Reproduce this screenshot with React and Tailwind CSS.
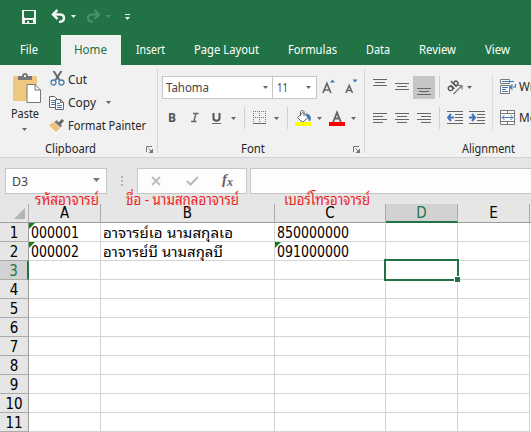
import React from "react";

const UI = "font-['Noto_Sans','Open_Sans',sans-serif]";
const CELL = "font-['DejaVu_Sans_Condensed','DejaVu_Sans','Noto_Sans_Thai_Looped','Loma','Garuda','Waree','Noto_Serif_Thai',sans-serif]";
const THAI = "font-['Noto_Sans_Thai_Looped','Loma','Garuda','Waree','Noto_Serif_Thai',sans-serif]";

function Svg({ w, h, className = "", children }) {
  return (
    <svg width={w} height={h} viewBox={`0 0 ${w} ${h}`} fill="none" className={`block shrink-0 ${className}`}>
      {children}
    </svg>
  );
}

function Arrow({ className = "", color = "#666" }) {
  return (
    <Svg w={5} h={3} className={className}>
      <path d="M0 0H5L2.5 3Z" fill={color} />
    </Svg>
  );
}

// Fixed-advance text run, so that labels keep their exact width.
function Label({ x = 0, y, w, size, fill, family = UI, weight, italic, children }) {
  return (
    <text
      x={x}
      y={y}
      textLength={w}
      lengthAdjust="spacingAndGlyphs"
      fontSize={size}
      fill={fill}
      fontWeight={weight}
      fontStyle={italic ? "italic" : undefined}
      className={family}
    >
      {children}
    </text>
  );
}

function TextBox({ w, h, className = "", ...rest }) {
  return (
    <Svg w={w} h={h} className={`overflow-visible ${className}`}>
      <Label w={w} {...rest} />
    </Svg>
  );
}

function TitleBar() {
  return (
    <div className="h-[35px] flex items-start bg-[#217346]">
      <Svg w={14} h={14} className="ml-[22px] mt-[10px]">
        <path fillRule="evenodd" fill="#f3f3f3" d="M0 0H14V14H0ZM2 1V7L3 8H11L12 7V1ZM3 10V13H5V11H7V13H11V10Z" />
      </Svg>
      <Svg w={15} h={14} className="ml-[15px] mt-[9px]">
        <path d="M2 5.500H9C12 5.500 13 7.500 13 9C13 11.500 11 12.800 8 12.800" stroke="#f3f3f3" strokeWidth="2.500" />
        <path d="M6.500 1L2 5.500L6.500 10" stroke="#f3f3f3" strokeWidth="2.500" />
      </Svg>
      <Arrow color="#f3f3f3" className="ml-[5px] mt-[15px]" />
      <Svg w={15} h={14} className="ml-[10px] mt-[9px]">
        <path d="M13 5.500H6C3 5.500 2 7.500 2 9C2 11.500 4 12.800 7 12.800" stroke="#4e9069" strokeWidth="2.200" />
        <path d="M8.500 1L13 5.500L8.500 10" stroke="#4e9069" strokeWidth="2.200" />
      </Svg>
      <Arrow color="#4e9069" className="ml-[5px] mt-[15px]" />
      <Svg w={5} h={6} className="ml-[14px] mt-[14px]">
        <path d="M0 0H5V1H0ZM0 3H5L2.500 6Z" fill="#f3f3f3" />
      </Svg>
    </div>
  );
}

const tabs = [
  { t: "File", cell: "w-[61px] pl-[20px]", w: 18 },
  { t: "Home", cell: "w-[60px] pl-[13px] bg-[#f1f1f1]", w: 33, fill: "#217346" },
  { t: "Insert", cell: "w-[58px] pl-[15px]", w: 29 },
  { t: "Page Layout", cell: "w-[94px] pl-[15px]", w: 65 },
  { t: "Formulas", cell: "w-[78px] pl-[15px]", w: 49 },
  { t: "Data", cell: "w-[53px] pl-[15px]", w: 24 },
  { t: "Review", cell: "w-[65px] pl-[15px]", w: 37 },
  { t: "View", cell: "w-[62px] pl-[16px]", w: 25 },
];

function Tabs() {
  return (
    <div className="h-[30px] flex bg-[#217346]">
      {tabs.map((t) => (
        <div key={t.t} className={`shrink-0 ${t.cell}`}>
          <TextBox w={t.w} h={30} y={19} size={12} fill={t.fill || "#fff"}>{t.t}</TextBox>
        </div>
      ))}
    </div>
  );
}

function Launcher({ className }) {
  return (
    <Svg w={7} h={7} className={className}>
      <path d="M.5 6V.5H6M2.500 2.500L5 5" stroke="#777" />
      <path d="M7 2.500V7H2.500Z" fill="#777" />
    </Svg>
  );
}

function Clipboard() {
  return (
    <section className="w-[157px] shrink-0">
      <div className="h-[74px] flex">
        <div className="w-[49px]">
          <Svg w={28} h={31} className="ml-[13px] mt-[8px]">
            <rect y="3" width="24" height="25" rx="1" fill="#edc87e" />
            <path d="M5 7V3H9C9 -1 15 -1 15 3H19V7Z" fill="#777" />
            <rect x="11" y="2" width="2" height="2" fill="#f1f1f1" />
            <path d="M14 11.500H22L27.500 17V29.500H14Z" fill="#fff" stroke="#777" />
            <path d="M22 11.500V17H27.500" stroke="#777" />
          </Svg>
          <TextBox w={28} h={18} y={14} size={12} fill="#262626" className="ml-[11px]">Paste</TextBox>
          <Arrow className="ml-[22px] mt-[6px]" />
        </div>
        <div className="pt-[4px]">
          <div className="h-[23px] flex items-center">
            <Svg w={15} h={15} className="ml-[1px] -mt-[4px]">
              <path d="M3.500 0L9.500 9M11.500 0L5.500 9" stroke="#666" strokeWidth="2" />
              <circle cx="3.500" cy="11.500" r="2.500" stroke="#4a7fb5" strokeWidth="1.300" />
              <circle cx="11.500" cy="11.500" r="2.500" stroke="#4a7fb5" strokeWidth="1.300" />
            </Svg>
            <TextBox w={19} h={23} y={15} size={12} fill="#262626" className="ml-[3px]">Cut</TextBox>
          </div>
          <div className="h-[23px] flex items-center">
            <Svg w={16} h={14} className="-mt-[2px]">
              <path d="M.5 .5H5.500L8.500 3.500V11.500H.5Z" fill="#fff" stroke="#666" />
              <path d="M2 4.500H6M2 6.500H6M2 8.500H6" stroke="#4a7fb5" />
              <path d="M6.500 3.500H11.500L14.500 6.500V13.500H6.500Z" fill="#fff" stroke="#666" />
              <path d="M11.500 3.500V6.500H14.500" stroke="#666" />
              <path d="M8 7.500H11M8 9.500H13M8 11.500H13" stroke="#4a7fb5" />
            </Svg>
            <TextBox w={28} h={23} y={15} size={12} fill="#262626" className="ml-[3px]">Copy</TextBox>
            <Arrow className="ml-[10px] -mt-[2px]" />
          </div>
          <div className="h-[23px] flex items-center">
            <Svg w={16} h={14} className="-mt-[3px]">
              <path d="M0 7L5 4L11 10L7 14Z" fill="#edc17b" />
              <path d="M5.500 4L11.500 9.500L13 7.500L7.500 2Z" fill="#777" />
              <path d="M10 6L14 2" stroke="#666" strokeWidth="3" />
            </Svg>
            <TextBox w={78} h={23} y={15} size={12} fill="#262626" className="ml-[3px]">Format Painter</TextBox>
          </div>
        </div>
      </div>
      <div className="h-[18px] flex">
        <TextBox w={51} h={18} y={14} size={12} fill="#262626" className="ml-[45px]">Clipboard</TextBox>
        <Launcher className="ml-[50px] mt-[7px]" />
      </div>
    </section>
  );
}

function Divider() {
  return <div className="w-px h-[84px] mt-[4px] shrink-0 bg-[#d5d5d5]" />;
}

function FontGroup() {
  return (
    <section className="w-[206px] shrink-0">
      <div className="h-[34px] pt-[11px] pl-[4px] flex">
        <div className="w-[111px] h-[23px] border border-[#c6c6c6] bg-white flex">
          <TextBox w={43} h={21} y={15} size={12} fill="#444" className="ml-[3px]">Tahoma</TextBox>
          <Arrow className="ml-[54px] mt-[9px]" />
        </div>
        <div className="w-[44px] h-[23px] border border-l-0 border-[#c6c6c6] bg-white flex">
          <TextBox w={11} h={21} y={15} size={12} fill="#444" className="ml-[4px]">11</TextBox>
          <Arrow className="ml-[18px] mt-[9px]" />
        </div>
        <Svg w={13} h={15} className="ml-[5px] mt-[3px]">
          <path d="M.9 14L4.900 4.500L8.900 14M2.500 11H7.300" stroke="#666" strokeWidth="1.700" />
          <path d="M8 3.500L10.500 .5L13 3.500Z" fill="#3f78b4" />
        </Svg>
        <Svg w={13} h={15} className="ml-[10px] mt-[3px]">
          <path d="M.9 14L4.200 6.500L7.500 14M2.200 11.500H6.200" stroke="#666" strokeWidth="1.600" />
          <path d="M7.500 .5H12.500L10 3.500Z" fill="#3f78b4" />
        </Svg>
      </div>
      <div className="h-[40px] pt-[8px] flex">
        <TextBox w={8} h={22} y={15} size={13} weight={700} fill="#555" className="ml-[10px]">B</TextBox>
        <Svg w={8} h={22} className="ml-[15px]">
          <path d="M2 6.500H7.500M0 14.500H5.500M5 6.500L2.800 14.500" stroke="#666" strokeWidth="1.400" />
        </Svg>
        <Svg w={9} h={22} className="ml-[13px]">
          <path d="M1.500 6V11C1.500 14.700 7.500 14.700 7.500 11V6" stroke="#555" strokeWidth="2" />
          <path d="M0 16.500H9" stroke="#666" />
        </Svg>
        <Arrow className="ml-[10px] mt-[10px]" />
        <div className="w-px h-[22px] ml-[8px] bg-[#d0d0d0]" />
        <Svg w={13} h={13} className="ml-[8px] mt-[4px]">
          <path d="M0 .5H13M0 6.500H13M.5 0V12M6.500 0V12M12.500 0V12" stroke="#777" strokeDasharray="1 1" />
          <path d="M0 12.500H13" stroke="#666" />
        </Svg>
        <Arrow className="ml-[8px] mt-[10px]" />
        <div className="w-px h-[22px] ml-[8px] bg-[#d0d0d0]" />
        <Svg w={16} h={16} className="ml-[7px] mt-[3px]">
          <path d="M2.500 7.500L8 2.500L13 7.500L8 12L6 11Z" fill="#fff" stroke="#666" />
          <path d="M5.500 6V2C5.500 0 9 0 9 2V6" stroke="#666" />
          <path d="M11 4C15 4 16.500 8 14.500 11L13.500 8Z" fill="#3f78b4" stroke="#3f78b4" />
          <path d="M0 12H16V16H0Z" fill="#ff0" />
        </Svg>
        <Arrow className="ml-[6px] mt-[10px]" />
        <Svg w={16} h={16} className="ml-[7px] mt-[3px]">
          <path d="M4.200 12L8 2.500L11.800 12M5.500 8.500H10.500" stroke="#666" strokeWidth="1.900" />
          <path d="M0 12H16V16H0Z" fill="#f00" />
        </Svg>
        <Arrow className="ml-[6px] mt-[10px]" />
      </div>
      <div className="h-[18px] flex">
        <TextBox w={24} h={18} y={14} size={12} fill="#262626" className="ml-[83px]">Font</TextBox>
        <Launcher className="ml-[88px] mt-[7px]" />
      </div>
    </section>
  );
}

function Lines({ d, className = "" }) {
  return (
    <Svg w={14} h={22} className={className}>
      <path d={d} stroke="#666" />
    </Svg>
  );
}

function Alignment() {
  return (
    <section className="w-[166px] shrink-0 overflow-hidden">
      <div className="h-[74px] flex">
        <div className="w-[127px] shrink-0">
          <div className="h-[42px] pt-[11px] flex">
            <Lines className="ml-[8px]" d="M0 3.500H14M2 6.500H12M0 9.500H14" />
            <Lines className="ml-[8px]" d="M0 7.500H14M2 10.500H12M0 13.500H14" />
            <div className="w-[22px] h-[23px] ml-[4px] pl-[4px] bg-[#c6c6c6]">
              <Lines d="M0 12.500H14M2 15.500H12M0 18.500H14" />
            </div>
            <div className="w-px h-[22px] ml-[4px] bg-[#d0d0d0]" />
            <Svg w={17} h={17} className="ml-[7px] mt-[3px]">
              <g transform="rotate(-45 6 7)">
                <ellipse cx="2.500" cy="7" rx="2" ry="2.300" stroke="#555" strokeWidth="1.400" />
                <path d="M5 4.500V10M8 2V10" stroke="#555" strokeWidth="1.400" />
                <ellipse cx="10" cy="7.200" rx="2" ry="2.200" stroke="#555" strokeWidth="1.400" />
              </g>
              <path d="M6.500 15L15 6.500M11 6.500H15V10.500" stroke="#777" strokeWidth="1.200" />
            </Svg>
            <Arrow className="ml-[3px] mt-[10px]" />
          </div>
          <div className="h-[22px] flex">
            <Lines className="ml-[8px]" d="M0 6.500H14M0 9.500H10M0 12.500H14M0 15.500H10" />
            <Lines className="ml-[8px]" d="M0 6.500H14M2 9.500H12M0 12.500H14M2 15.500H12" />
            <Lines className="ml-[8px]" d="M0 6.500H14M4 9.500H14M0 12.500H14M4 15.500H14" />
            <div className="w-px h-[22px] ml-[8px] bg-[#d0d0d0]" />
            <Svg w={16} h={22} className="ml-[7px]">
              <path d="M0 4.500H16M8 7.500H16M8 10.500H16M8 13.500H16M0 16.500H16" stroke="#666" />
              <path d="M1 10.500H7M4 7L1 10.500L4 14" stroke="#3f78b4" strokeWidth="2" />
            </Svg>
            <Svg w={16} h={22} className="ml-[6px]">
              <path d="M0 4.500H16M8 7.500H16M8 10.500H16M8 13.500H16M0 16.500H16" stroke="#666" />
              <path d="M0 10.500H6M3 7L6 10.500L3 14" stroke="#3f78b4" strokeWidth="2" />
            </Svg>
          </div>
        </div>
        <div className="w-px h-[55px] mt-[10px] shrink-0 bg-[#dcdcdc]" />
        <div className="pl-[7px] pt-[14px]">
          <div className="flex h-[31px]">
            <Svg w={16} h={16}>
              <path d="M.5 .5H9.500V4.500H.5ZM.5 6.500H9.500V14.500H.5Z" fill="#fff" stroke="#777" />
              <path d="M2 2.500H14M2 8.500H8M2 10.500H6M2 12.500H8M15.500 5V8H10M12.500 5.500L10 8L12.500 10.500" stroke="#3f78b4" strokeWidth="1.200" />
            </Svg>
            <TextBox w={29} h={16} y={12} size={12} fill="#262626" className="ml-[3px]">Wrap</TextBox>
          </div>
          <div className="flex">
            <Svg w={16} h={16}>
              <path d="M.5 .5H14.500V14.500H.5ZM.5 3.500H14.500M.5 11.500H14.500M7.500 0V3M7.500 12V15" fill="#fff" stroke="#777" />
              <path d="M2 7.500H13M4.500 5L2 7.500L4.500 10M10.500 5L13 7.500L10.500 10" stroke="#3f78b4" />
            </Svg>
            <TextBox w={36} h={16} y={12} size={12} fill="#262626" className="ml-[3px]">Merge</TextBox>
          </div>
        </div>
      </div>
      <div className="h-[18px]">
        <TextBox w={53} h={18} y={14} size={12} fill="#262626" className="ml-[97px]">Alignment</TextBox>
      </div>
    </section>
  );
}

function FormulaBar() {
  return (
    <div className="h-[38px] pt-[10px] pl-[5px] flex border-t border-[#d2d2d2] bg-[#e6e6e6]">
      <div className="w-[102px] h-[26px] border border-[#c6c6c6] bg-[#fdfdfd] flex">
        <TextBox w={16} h={24} y={17} size={12} fill="#444" className="ml-[6px]">D3</TextBox>
        <Svg w={7} h={4} className="ml-[65px] mt-[9px]"><path d="M0 0H7L3.500 4Z" fill="#777" /></Svg>
      </div>
      <Svg w={2} h={10} className="ml-[14px] mt-[8px]">
        <path d="M0 0H2V2H0ZM0 4H2V6H0ZM0 8H2V10H0Z" fill="#b4b4b4" />
      </Svg>
      <div className="w-[110px] h-[26px] ml-[14px] border border-[#c6c6c6] bg-[#fdfdfd] flex">
        <Svg w={10} h={10} className="ml-[13px] mt-[7px]"><path d="M1 1L9 9M9 1L1 9" stroke="#bbb" strokeWidth="1.800" /></Svg>
        <Svg w={13} h={10} className="ml-[25px] mt-[7px]"><path d="M1 5L4.500 8.500L12 1" stroke="#bbb" strokeWidth="2.200" /></Svg>
        <Svg w={14} h={24} className="ml-[22px] overflow-visible">
          <text x="1" y="15" fontSize="15" fontStyle="italic" fontWeight="700" fill="#666" className="font-['Liberation_Serif',serif]">f</text>
          <text x="6" y="17" fontSize="12" fontStyle="italic" fontWeight="700" fill="#666" className="font-['Liberation_Serif',serif]">x</text>
        </Svg>
      </div>
      <div className="flex-1 h-[26px] ml-[3px] border border-r-0 border-[#c6c6c6] bg-[#fdfdfd]" />
    </div>
  );
}

const cols = [
  { k: "A", head: "w-[72px]", body: "w-[72px]" },
  { k: "B", head: "w-[174px]", body: "w-[174px]" },
  { k: "C", head: "w-[111px]", body: "w-[111px]" },
  { k: "D", head: "w-[72px]", body: "w-[72px]" },
  { k: "E", head: "w-[72px]", body: "w-[72px]" },
];

const data = {
  A1: { t: "000001", w: 48, flag: true },
  B1: { t: "อาจารย์เอ นามสกุลเอ", w: 130 },
  C1: { t: "850000000", w: 72 },
  A2: { t: "000002", w: 48, flag: true },
  B2: { t: "อาจารย์บี นามสกุลบี", w: 120 },
  C2: { t: "091000000", w: 72, flag: true },
};

function Note({ className, w, children }) {
  return (
    <div className={`absolute ${className}`}>
      <TextBox w={w} h={16} y={12} size={15} fill="#ed1c24" family={THAI}>{children}</TextBox>
    </div>
  );
}

function Sheet() {
  return (
    <div className="relative h-[237px] bg-white">
      <div className="h-[28px] pt-[9px] flex border-b border-[#9b9b9b] bg-[#e6e6e6]">
        <div className="w-[29px] h-[18px] shrink-0 border-r border-[#b0b0b0]">
          <Svg w={11} h={11} className="ml-[14px] mt-[4px]"><path d="M11 0V11H0Z" fill="#b4b4b4" /></Svg>
        </div>
        {cols.map((c) => (
          <div
            key={c.k}
            className={`${c.head} shrink-0 h-[19px] border-r border-[#ababab] text-center text-[15px] leading-[19px] ${CELL} ${
              c.k === "D" ? "bg-[#d2d2d2] text-[#217346] border-b-2 border-b-[#217346]" : "text-black"
            }`}
          >
            {c.k}
          </div>
        ))}
      </div>
      {Array.from({ length: 11 }, (_, i) => i + 1).map((n) => (
        <div key={n} className="h-[19px] flex">
          <div
            className={`w-[29px] shrink-0 border-b border-b-[#ababab] text-center text-[15px] leading-[20px] ${CELL} ${
              n === 3 ? "bg-[#d2d2d2] text-[#217346] border-r-2 border-r-[#217346]" : "bg-[#e6e6e6] text-black border-r border-r-[#9b9b9b]"
            }`}
          >
            {n}
          </div>
          {cols.map((c) => {
            const v = data[c.k + n];
            return (
              <div key={c.k} className={`${c.body} relative shrink-0 border-r border-b border-[#d4d4d4]`}>
                {v && <TextBox w={v.w} h={18} y={15} size={c.k === "B" ? 14 : 15} fill="#000" family={CELL} className="ml-[2px]">{v.t}</TextBox>}
                {v && v.flag && (
                  <Svg w={6} h={6} className="absolute left-0 top-0"><path d="M0 0H6L0 6Z" fill="#0b8010" /></Svg>
                )}
              </div>
            );
          })}
        </div>
      ))}
      <div className="absolute left-[384px] top-[64px] w-[75px] h-[22px] border-2 border-[#217346]" />
      <div className="absolute left-[454px] top-[81px] w-[6px] h-[6px] border-t border-l border-white bg-[#217346]" />
      <Note className="left-[35px] top-[-2px]" w={64}>รหัสอาจารย์</Note>
      <Note className="left-[126px] top-[-2px]" w={113}>ชื่อ - นามสกุลอาจารย์</Note>
      <Note className="left-[284px] top-[-2px]" w={86}>เบอร์โทรอาจารย์</Note>
    </div>
  );
}

export default function App() {
  return (
    <main className="w-[531px] h-[432px] overflow-hidden bg-[#e6e6e6]">
      <TitleBar />
      <Tabs />
      <div className="h-[92px] flex bg-[#f1f1f1]">
        <Clipboard />
        <Divider />
        <FontGroup />
        <Divider />
        <Alignment />
      </div>
      <FormulaBar />
      <Sheet />
    </main>
  );
}
